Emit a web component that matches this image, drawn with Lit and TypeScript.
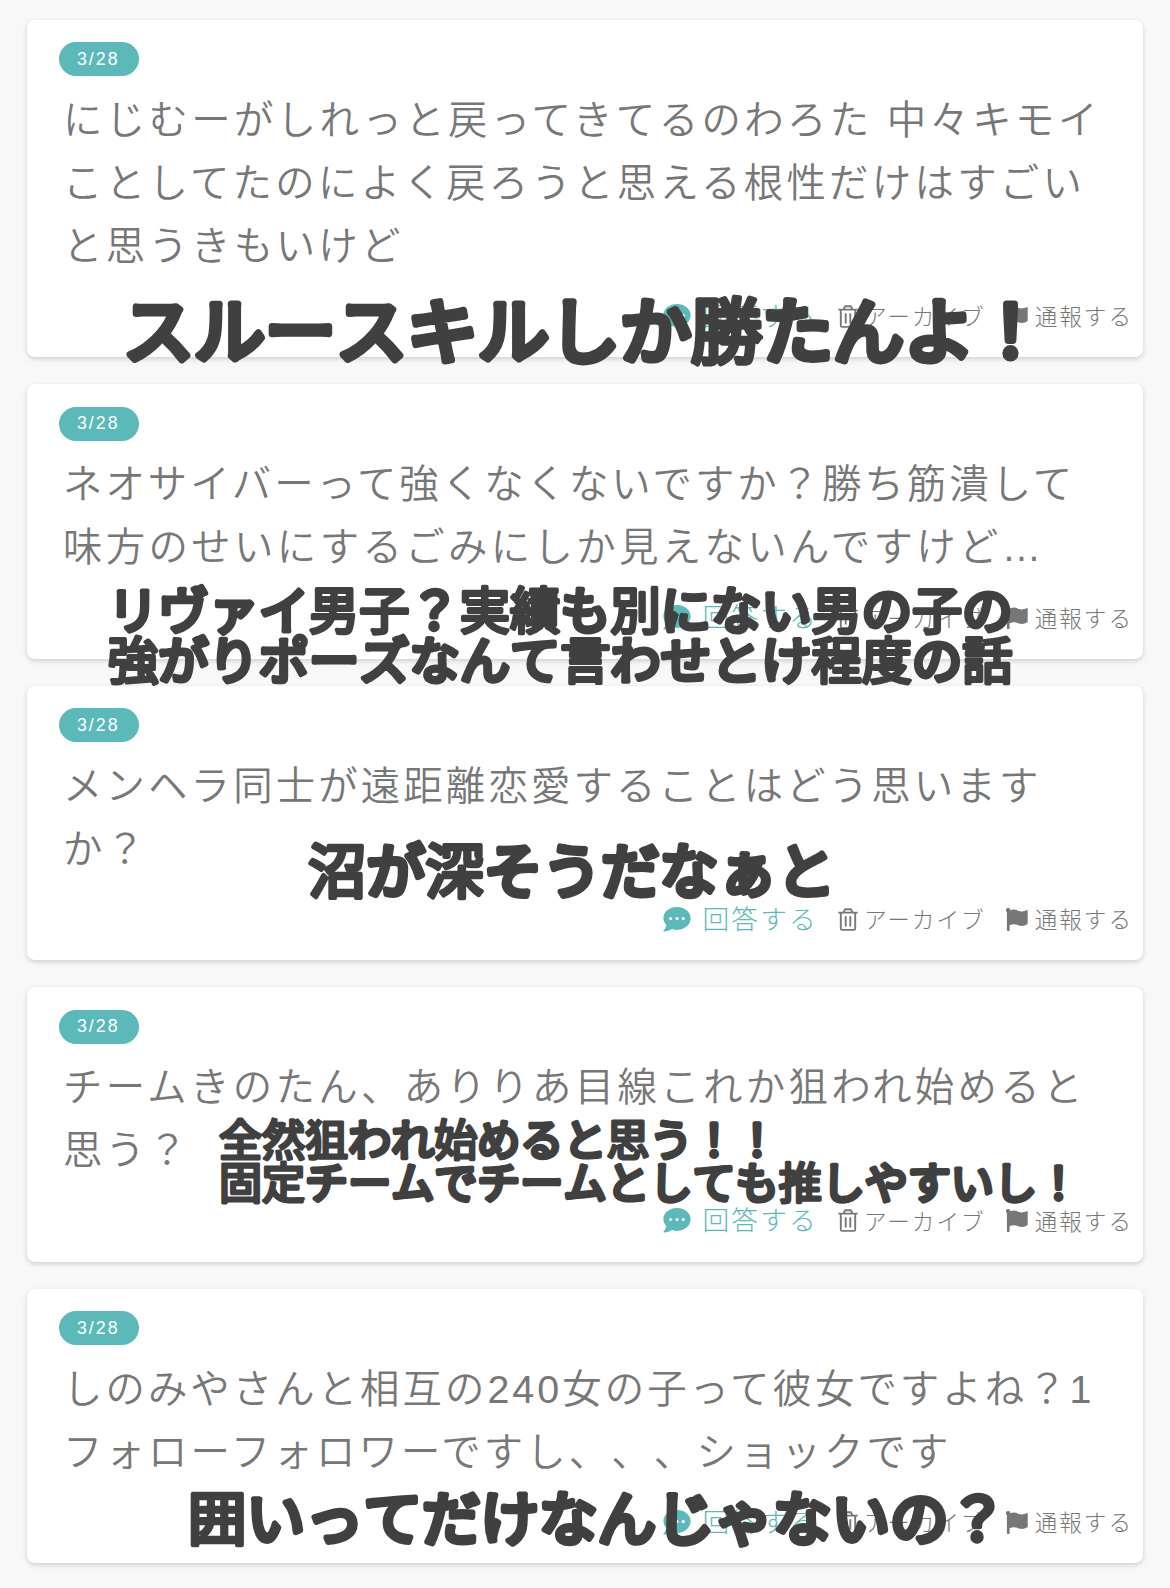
import { LitElement, html, css, svg } from "lit";
import { customElement, property } from "lit/decorators.js";

interface Note {
  lines: string[];
  pitch: number;
  x: number;
  y: number;
}

interface Line {
  text: string;
  tracking: number;
}

interface Message {
  date: string;
  lines: Line[];
  note: Note;
}

const messages: Message[] = [
  {
    date: "3/28",
    lines: [
      { text: "にじむーがしれっと戻ってきてるのわろた 中々キモイ", tracking: 3.38 },
      { text: "ことしてたのによく戻ろうと思える根性だけはすごい", tracking: 3.3 },
      { text: "と思うきもいけど", tracking: 3.3 },
    ],
    note: { lines: ["スルースキルしか勝たんよ！"], pitch: 71, x: 96, y: 276 },
  },
  {
    date: "3/28",
    lines: [
      { text: "ネオサイバーって強くなくないですか？勝ち筋潰して", tracking: 3 },
      { text: "味方のせいにするごみにしか見えないんですけど…", tracking: 3.35 },
    ],
    note: {
      lines: ["リヴァイ男子？実績も別にない男の子の", "強がりポーズなんて言わせとけ程度の話"],
      pitch: 50.25,
      x: 81,
      y: 202,
    },
  },
  {
    date: "3/28",
    lines: [
      { text: "メンヘラ同士が遠距離恋愛することはどう思います", tracking: 3.15 },
      { text: "か？", tracking: 3 },
    ],
    note: { lines: ["沼が深そうだなぁと"], pitch: 58.6, x: 281, y: 157 },
  },
  {
    date: "3/28",
    lines: [
      { text: "チームきのたん、ありりあ目線これか狙われ始めると", tracking: 3.35 },
      { text: "思う？", tracking: 3 },
    ],
    note: {
      lines: ["全然狙われ始めると思う！！", "固定チームでチームとしても推しやすいし！"],
      pitch: 43.05,
      x: 192,
      y: 132,
    },
  },
  {
    date: "3/28",
    lines: [
      { text: "しのみやさんと相互の240女の子って彼女ですよね？1", tracking: 3.05 },
      { text: "フォローフォロワーですし、、、ショックです", tracking: 3.15 },
    ],
    note: { lines: ["囲いってだけなんじゃないの？"], pitch: 58.5, x: 161, y: 201.5 },
  },
];

const bubbleIcon = svg`<svg class="bubble" viewBox="0 0 28 25">
  <path fill="currentColor" d="M14 0C6.3 0 .4 4.900.4 11.100c0 2.700 1.100 5.100 2.900 7C2.900 20.300 1.900 22.300.6 23.600c-.4.4-.1 1 .4 1 3.200 0 5.900-1.200 7.800-2.500 1.600.5 3.400.8 5.200.8 7.700 0 13.600-5.200 13.600-11.600S21.700 0 14 0z"/>
  <g fill="#fff"><circle cx="7.700" cy="11.500" r="1.600"/><circle cx="14" cy="11.500" r="1.600"/><circle cx="20.300" cy="11.500" r="1.600"/></g>
</svg>`;

const trashIcon = svg`<svg class="trash" viewBox="0 0 20 23">
  <g fill="none" stroke="currentColor" stroke-width="1.900" stroke-linejoin="round">
    <path d="M.3 4.600H19.700M5.600 4.300L7.100 1.200H12.900L14.400 4.300M2.800 5V20.600Q2.800 21.900 4.100 21.900H15.900Q17.200 21.900 17.200 20.600V5M7.700 8.200V18.500M12.300 8.200V18.500"/>
  </g>
</svg>`;

const flagIcon = svg`<svg class="flag" viewBox="0 0 22 23">
  <path fill="currentColor" d="M2.200 0A2.100 2.100 0 0 1 4.300 2.300Q6 1.600 7.800 1.600C11 1.600 13 3.400 15.700 3.400 17.600 3.400 19 2.800 20.300 2.200Q21.700 1.700 21.700 3V15.300Q21.700 16.200 20.900 16.600C19.500 17.400 17.900 17.900 16.100 17.900 12.900 17.900 11 16.200 8 16.200Q5.500 16.200 3.600 17.200V22Q3.600 22.900 2.700 22.900H1.700Q.9 22.900.9 22V3.900A2.100 2.100 0 0 1 2.200 0z"/>
</svg>`;

/* Dense kanji get a lighter outline than kana so their counters stay open. */
function glyphClass(run: string) {
  return /[\u4e00-\u9fff]/.test(run) ? "kanji" : "kana";
}

/* Every glyph of a note sits centred in a square cell of side `pitch`. */
function noteText(note: Note) {
  const { pitch, lines } = note;
  const columns = Math.max(...lines.map((l) => l.length));
  return html`<svg
    class="note"
    style="left:${note.x}px;top:${note.y}px"
    width=${columns * pitch}
    height=${lines.length * pitch}
    font-size=${pitch}
  >
    ${lines.map((l, row) => {
      const runs = l.match(/[\u4e00-\u9fff]+|[^\u4e00-\u9fff]+/g) ?? [];
      return svg`<text
        x=${[...l].map((_, i) => ((i + 0.5) * pitch).toFixed(2)).join(" ")}
        y=${(row + 0.86) * pitch}>${runs.map((r) => svg`<tspan class=${glyphClass(r)}>${r}</tspan>`)}</text>`;
    })}
  </svg>`;
}

@customElement("message-card")
class MessageCard extends LitElement {
  @property({ attribute: false }) message!: Message;

  static styles = css`
    :host {
      display: block;
    }
    .card {
      position: relative;
      box-sizing: border-box;
      background: #fff;
      border-radius: 8px;
      box-shadow: 0 2px 5px rgba(0, 0, 0, 0.17);
      padding: 22.5px 10px 25px 31.500px;
      color: #777;
    }
    .date {
      display: flex;
      align-items: center;
      justify-content: center;
      box-sizing: border-box;
      width: 80.500px;
      height: 34px;
      padding-right: 1px;
      border-radius: 17px;
      background: #5cb9b9;
      color: #fff;
      font-size: 17.800px;
      letter-spacing: 2px;
    }
    .body {
      margin: 12.500px 0 0 4.500px;
      font-size: 39.400px;
      line-height: 63.100px;
      font-weight: 350;
      text-spacing-trim: space-all;
    }
    .line {
      display: block;
      height: 63.100px;
      white-space: nowrap;
    }
    .actions {
      display: flex;
      align-items: center;
      justify-content: flex-end;
      height: 32px;
      margin-top: 22.400px;
      line-height: 32px;
      font-weight: 300;
      white-space: nowrap;
    }
    .action {
      display: flex;
      align-items: center;
      font-size: 22.600px;
      letter-spacing: 2px;
    }
    .action.reply {
      color: #5cb9b9;
      font-size: 26.700px;
      gap: 11px;
      letter-spacing: 2.200px;
      margin-right: 20px;
    }
    .action.archive {
      gap: 6px;
      margin-right: 20px;
    }
    .action.report {
      gap: 7px;
    }
    .label {
      padding-top: 4px;
    }
    .reply .label {
      padding-top: 1px;
    }
    .bubble {
      width: 28px;
      height: 25px;
    }
    .trash {
      width: 20px;
      height: 23px;
    }
    .flag {
      width: 22px;
      height: 23px;
    }
    .note {
      position: absolute;
      z-index: 2;
      overflow: visible;
      fill: #404040;
      stroke: #404040;
      stroke-linejoin: round;
      stroke-linecap: round;
      text-anchor: middle;
      font-family: "Noto Sans CJK JP", sans-serif;
    }
    .kana {
      font-weight: 400;
      stroke-width: 0.1em;
    }
    .kanji {
      font-weight: 400;
      stroke-width: 0.075em;
    }
  `;

  render() {
    const { date, lines, note } = this.message;
    return html`
      <article class="card">
        <span class="date">${date}</span>
        <div class="body">
          ${lines.map((l) => html`<span class="line" style="letter-spacing:${l.tracking}px">${l.text}</span>`)}
        </div>
        <div class="actions">
          <span class="action reply">${bubbleIcon}<span class="label">回答する</span></span>
          <span class="action archive">${trashIcon}<span class="label">アーカイブ</span></span>
          <span class="action report">${flagIcon}<span class="label">通報する</span></span>
        </div>
        ${noteText(note)}
      </article>
    `;
  }
}

@customElement("app-root")
class AppRoot extends LitElement {
  static styles = css`
    :host {
      display: block;
      font-family: "Liberation Sans", "Noto Sans CJK JP", sans-serif;
    }
    .page {
      box-sizing: border-box;
      height: 1588px;
      overflow: hidden;
      padding: 19.500px 27px 0;
      background: #f8f8f8;
      display: flex;
      flex-direction: column;
      gap: 27px;
    }
  `;

  render() {
    return html`<main class="page">
      ${messages.map((m) => html`<message-card .message=${m}></message-card>`)}
    </main>`;
  }
}
